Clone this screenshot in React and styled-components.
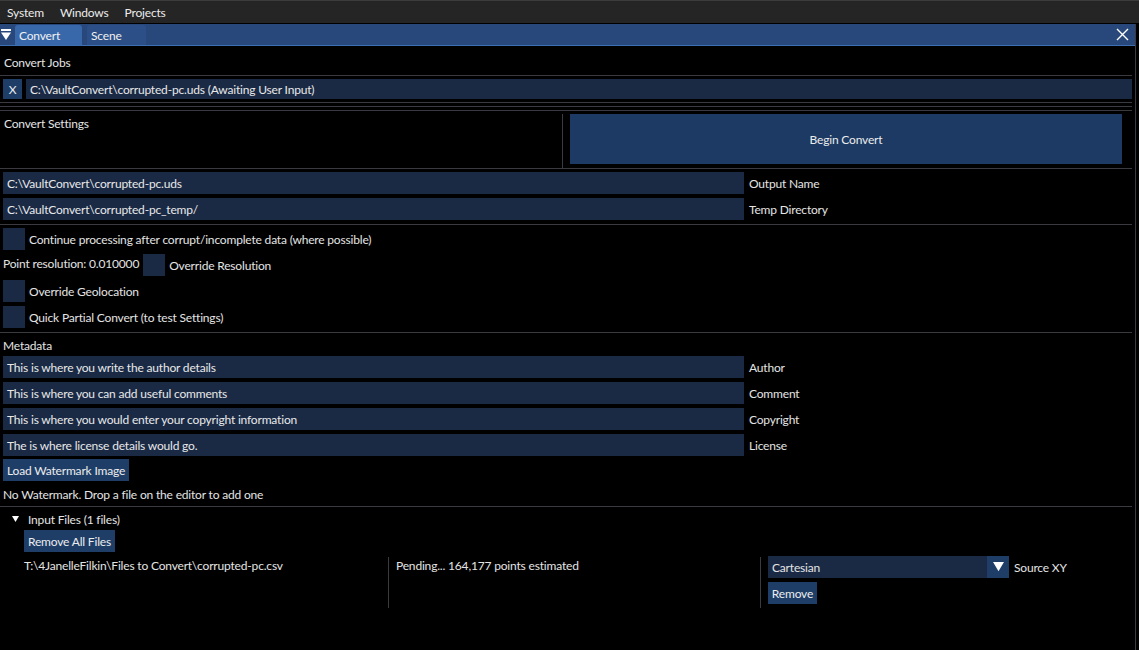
import React from "react";
import styled, { createGlobalStyle } from "styled-components";

const GlobalStyle = createGlobalStyle`
  html, body {
    margin: 0;
    padding: 0;
    background: #000;
  }
  body {
    font-family: Lato, "Noto Sans", sans-serif;
    font-size: 12px;
    letter-spacing: -0.18px;
    color: #e4e4e4;
  }
`;

const Screen = styled.div`
  width: 1139px;
  height: 650px;
  overflow: hidden;
  background: #000;
  display: flex;
  flex-direction: column;
`;

const MenuBar = styled.div`
  height: 23px;
  flex-shrink: 0;
  background: #252525;
  border-top: 1px solid #3c3c3c;
  box-sizing: border-box;
  display: flex;
  align-items: center;
  padding-left: 7px;
  gap: 16px;
`;

const MenuItem = styled.span`
  color: #ececec;
`;

const Window = styled.div`
  width: 1136px;
  flex: 1;
  border-right: 1px solid #3b3b44;
  box-sizing: border-box;
  display: flex;
  flex-direction: column;
  margin-top: 1px;
`;

const TitleBar = styled.div`
  height: 21px;
  flex-shrink: 0;
  background: #28487b;
  border-bottom: 1px solid #3d6fb3;
  display: flex;
  align-items: flex-end;
  padding-left: 1px;
  padding-right: 6px;
`;

const Collapse = styled.div`
  width: 12px;
  height: 21px;
  display: flex;
  align-items: center;
  margin-right: 2px;
`;

const Tab = styled.div`
  height: 20px;
  box-sizing: border-box;
  padding: 0 0 0 4px;
  width: ${(p) => p.w}px;
  margin-right: 5px;
  border-radius: 3px 3px 0 0;
  background: ${(p) => (p.active ? "#3868aa" : "#2b4f86")};
  display: flex;
  align-items: center;
  color: #f0f0f0;
`;

const CloseBox = styled.div`
  margin-left: auto;
  align-self: center;
  width: 14px;
  height: 14px;
  display: flex;
  align-items: center;
  justify-content: center;
`;

const Content = styled.div`
  display: flex;
  flex-direction: column;
  padding-right: 3px;
`;

const Separator = styled.div`
  height: 1px;
  background: #3a3a40;
  margin-top: ${(p) => p.mt || 0}px;
`;

const TextLine = styled.div`
  height: ${(p) => p.h || 18}px;
  margin-top: ${(p) => p.mt || 0}px;
  padding-left: ${(p) => p.pl || 3}px;
  display: flex;
  align-items: center;
  white-space: nowrap;
`;

const Row = styled.div`
  display: flex;
  align-items: center;
  height: ${(p) => p.h || 22}px;
  margin-top: ${(p) => p.mt || 0}px;
  padding-left: ${(p) => p.pl || 3}px;
  gap: ${(p) => (p.gap === undefined ? 4 : p.gap)}px;
  white-space: nowrap;
`;

const Field = styled.div`
  width: ${(p) => (p.w ? `${p.w}px` : "auto")};
  flex: ${(p) => (p.w ? "none" : 1)};
  height: 100%;
  background: #1a2a45;
  display: flex;
  align-items: center;
  padding-left: 4px;
  box-sizing: border-box;
  color: #e8e8e8;
`;

const Label = styled.span`
  margin-left: 1px;
`;

const Button = styled.div`
  height: ${(p) => p.h || 22}px;
  width: ${(p) => (p.w ? `${p.w}px` : "auto")};
  padding: 0 ${(p) => (p.w ? 0 : 4)}px;
  box-sizing: border-box;
  background: #1e3e68;
  display: flex;
  align-items: center;
  justify-content: center;
  color: #ececec;
  flex-shrink: 0;
  margin-top: ${(p) => p.mt || 0}px;
  align-self: flex-start;
  margin-left: ${(p) => p.ml || 0}px;
`;

const Checkbox = styled.div`
  width: 22px;
  height: 22px;
  background: #1a2a45;
  flex-shrink: 0;
  margin-left: ${(p) => p.ml || 0}px;
`;

const ResolutionText = styled.span`
  margin-top: -4px;
`;

const SettingsColumns = styled.div`
  display: flex;
  height: 57px;
`;

const LeftCol = styled.div`
  width: 563px;
  border-right: 1px solid #3a3a40;
  margin-top: 3px;
  padding-left: 3px;
  box-sizing: border-box;
`;

const RightCol = styled.div`
  flex: 1;
  padding: 3px 10px 0 7px;
`;

const BigButton = styled.div`
  height: 50px;
  background: #1c3a63;
  display: flex;
  align-items: center;
  justify-content: center;
  color: #ececec;
`;

const TreeNode = styled.div`
  display: flex;
  align-items: center;
  height: 20px;
  margin-top: 2px;
  padding-left: 12px;
  gap: 9px;
`;

const FileTable = styled.div`
  display: grid;
  grid-template-columns: 364px 372px 1fr;
  margin-top: 5px;
  margin-left: 24px;
  height: 51px;
`;

const Cell = styled.div`
  border-left: ${(p) => (p.first ? "none" : "1px solid #3a3a40")};
  padding-left: ${(p) => (p.first ? 0 : 7)}px;
  display: flex;
  flex-direction: column;
  gap: 4px;
`;

const CellText = styled.div`
  height: 17px;
  display: flex;
  align-items: center;
`;

const Combo = styled.div`
  display: flex;
  align-items: center;
  height: 22px;
  margin-top: -1px;
  gap: 5px;
`;

const ComboBody = styled.div`
  width: 219px;
  height: 100%;
  background: #1a2a45;
  display: flex;
  align-items: center;
  padding-left: 4px;
  box-sizing: border-box;
`;

const ComboArrow = styled.div`
  width: 22px;
  height: 100%;
  background: #1e3e68;
  display: flex;
  align-items: center;
  justify-content: center;
  margin-left: -5px;
`;

const DownTriangle = ({ size = 10 }) => (
  <svg width={size} height={size * 0.85} viewBox="0 0 10 8.5">
    <polygon points="0,0 10,0 5,8.5" fill="#fff" />
  </svg>
);

const meta = [
  ["This is where you write the author details", "Author"],
  ["This is where you can add useful comments", "Comment"],
  ["This is where you would enter your copyright information", "Copyright"],
  ["The is where license details would go.", "License"],
];

export default function App() {
  return (
    <>
      <GlobalStyle />
      <Screen>
        <MenuBar>
          <MenuItem>System</MenuItem>
          <MenuItem>Windows</MenuItem>
          <MenuItem>Projects</MenuItem>
        </MenuBar>
        <Window>
          <TitleBar>
            <Collapse>
              <svg width="10" height="12" viewBox="0 0 10 12">
                <rect x="0" y="0" width="10" height="2" fill="#fff" />
                <polygon points="0,3.5 10,3.5 5,11" fill="#fff" />
              </svg>
            </Collapse>
            <Tab active w={67}>Convert</Tab>
            <Tab w={59}>Scene</Tab>
            <CloseBox>
              <svg width="13" height="13" viewBox="0 0 13 13">
                <path d="M1 1 L12 12 M12 1 L1 12" stroke="#fff" strokeWidth="1.4" />
              </svg>
            </CloseBox>
          </TitleBar>
          <Content>
            <TextLine h={22} mt={5} pl={4}>Convert Jobs</TextLine>
            <Separator mt={2} />
            <Row h={20} mt={3} gap={4}>
              <Button w={19} h={20}>X</Button>
              <Field>C:\VaultConvert\corrupted-pc.uds (Awaiting User Input)</Field>
            </Row>
            <Separator mt={3} />
            <Separator mt={3} />
            <Separator mt={3} />
            <SettingsColumns>
              <LeftCol>
                <TextLine h={18} pl={1}>Convert Settings</TextLine>
              </LeftCol>
              <RightCol>
                <BigButton>Begin Convert</BigButton>
              </RightCol>
            </SettingsColumns>
            <Separator />
            <Row mt={3}>
              <Field w={741}>C:\VaultConvert\corrupted-pc.uds</Field>
              <Label>Output Name</Label>
            </Row>
            <Row mt={4}>
              <Field w={741}>C:\VaultConvert\corrupted-pc_temp/</Field>
              <Label>Temp Directory</Label>
            </Row>
            <Separator mt={4} />
            <Row mt={3}>
              <Checkbox />
              <span>Continue processing after corrupt/incomplete data (where possible)</span>
            </Row>
            <Row mt={4} gap={4}>
              <ResolutionText>Point resolution: 0.010000</ResolutionText>
              <Checkbox />
              <span>Override Resolution</span>
            </Row>
            <Row mt={4}>
              <Checkbox />
              <span>Override Geolocation</span>
            </Row>
            <Row mt={4}>
              <Checkbox />
              <span>Quick Partial Convert (to test Settings)</span>
            </Row>
            <Separator mt={4} />
            <TextLine h={19} mt={3}>Metadata</TextLine>
            {meta.map(([v, l], i) => (
              <Row key={l} mt={i === 0 ? 1 : 4}>
                <Field w={741}>{v}</Field>
                <Label>{l}</Label>
              </Row>
            ))}
            <Button mt={3} ml={3}>Load Watermark Image</Button>
            <TextLine h={18} mt={4}>No Watermark. Drop a file on the editor to add one</TextLine>
            <Separator mt={3} />
            <TreeNode>
              <DownTriangle size={7} />
              <span>Input Files (1 files)</span>
            </TreeNode>
            <Button mt={1} ml={24}>Remove All Files</Button>
            <FileTable>
              <Cell first>
                <CellText>T:\4JanelleFilkin\Files to Convert\corrupted-pc.csv</CellText>
              </Cell>
              <Cell>
                <CellText>Pending... 164,177 points estimated</CellText>
              </Cell>
              <Cell>
                <Combo>
                  <ComboBody>Cartesian</ComboBody>
                  <ComboArrow>
                    <DownTriangle size={11} />
                  </ComboArrow>
                  <span>Source XY</span>
                </Combo>
                <Button w={49}>Remove</Button>
              </Cell>
            </FileTable>
          </Content>
        </Window>
      </Screen>
    </>
  );
}
